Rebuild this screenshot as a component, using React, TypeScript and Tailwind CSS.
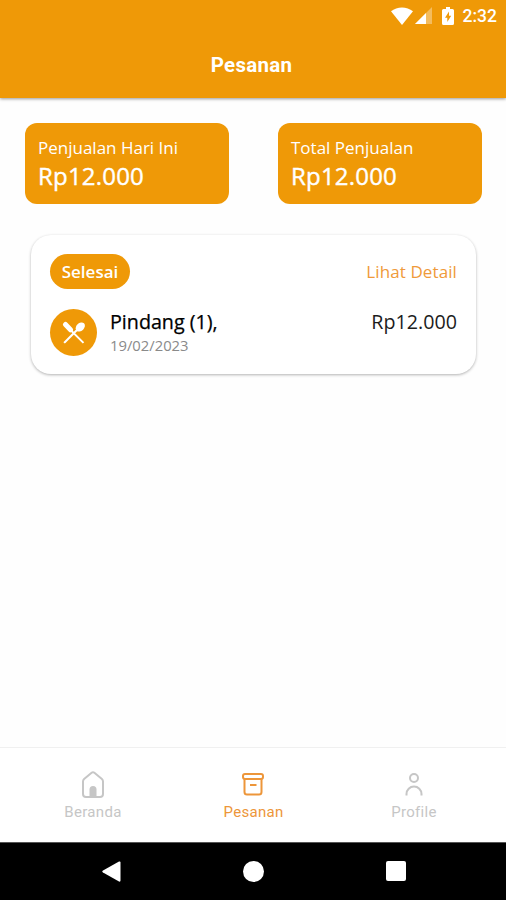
type Summary = { label: string; value: string };

const summaries: Summary[] = [
  { label: "Penjualan Hari Ini", value: "Rp12.000" },
  { label: "Total Penjualan", value: "Rp12.000" },
];

function StatusBar() {
  return (
    <div className="flex h-8 items-center justify-end pr-[9px] text-white">
      <svg width="22" height="18" viewBox="0 0 22 18" fill="currentColor">
        <path d="M0 4.2C6.2-.9 15.800-.9 22 4.200L11 18z" />
      </svg>
      <svg className="-mt-px ml-[2px]" width="17" height="17" viewBox="0 0 17 17" fill="currentColor">
        <path d="M17 0v17H0z" opacity="0.35" />
        <path d="M11 6v11H0z" />
      </svg>
      <svg className="-mt-px ml-[10px]" width="12" height="18" viewBox="0 0 12 18">
        <path
          d="M4 0h4v2h2.500Q12 2 12 3.500v13Q12 18 10.500 18h-9Q0 18 0 16.500v-13Q0 2 1.500 2H4z"
          fill="currentColor"
        />
        <path d="M7 4.500L3 10.800h2.300v4.200l3.900-6.300H7z" fill="#f09a08" />
      </svg>
      <span className="ml-[9px] font-['Roboto',sans-serif] text-[17.500px] font-medium leading-5">
        2:32
      </span>
    </div>
  );
}

function SummaryCard({ label, value }: Summary) {
  return (
    <div className="h-[81px] w-[204px] rounded-[12px] bg-[#ef9907] px-[13px] pt-[13px] text-white">
      <p className="text-[17px] leading-[23px]">{label}</p>
      <p className="text-[24px] leading-[33px] tracking-[0.2px] [-webkit-text-stroke:0.4px]">{value}</p>
    </div>
  );
}

function CutleryIcon() {
  return (
    <svg width="24" height="24" viewBox="0 0 24 24" fill="none" stroke="currentColor" strokeWidth="2">
      <path d="M3.500 3.500L8.500 8.800" strokeWidth="5" strokeLinecap="round" />
      <ellipse cx="18.300" cy="6" rx="5.200" ry="3.900" transform="rotate(-45 18.300 6)" fill="currentColor" stroke="none" />
      <path d="M15 9L2.800 21.200M8 8.500L20.800 21.200" strokeLinecap="square" />
    </svg>
  );
}

function OrderCard() {
  return (
    <div className="ml-[31px] mr-[30px] mt-[31px] h-[139px] rounded-[20px] bg-white px-[19px] pt-[19px] shadow-[0_1px_3px_rgba(0,0,0,0.3)]">
      <div className="flex items-center justify-between">
        <span className="flex h-[35px] w-20 items-center justify-center rounded-full bg-[#ef9907] text-[17px] font-semibold text-white">
          Selesai
        </span>
        <a className="text-[17px] tracking-[0.1px] text-[#ef9a3a]">Lihat Detail</a>
      </div>

      <div className="mt-5 flex">
        <div className="flex size-[47px] items-center justify-center rounded-full bg-[#ef9907] text-white">
          <CutleryIcon />
        </div>
        <div className="ml-[13px] flex-1">
          <p className="text-[19.700px] leading-[26px] text-black [-webkit-text-stroke:0.25px]">Pindang (1),</p>
          <p className="text-[14.800px] leading-5 text-[#8a8a8a]">19/02/2023</p>
        </div>
        <p className="text-[19.700px] leading-[26px] text-[#1c1c1c]">Rp12.000</p>
      </div>
    </div>
  );
}

function HomeIcon() {
  return (
    <svg width="26" height="30" viewBox="0 0 26 30" fill="none" stroke="currentColor" strokeWidth="2">
      <path d="M3 11.500Q3 10 4.100 9L11.600 2.800Q13 1.700 14.400 2.800L21.900 9Q23 10 23 11.500V24Q23 27 20 27H6Q3 27 3 24z" />
      <path d="M9.500 27v-7.500a3.500 3.500 0 0 1 7 0V27z" fill="currentColor" stroke="none" />
    </svg>
  );
}

function OrderIcon() {
  return (
    <svg width="26" height="30" viewBox="0 0 26 30" fill="none" stroke="currentColor" strokeWidth="2">
      <rect x="3" y="4" width="20" height="5" rx="2" />
      <path d="M4.500 9v13Q4.500 24.500 7 24.500h12Q21.500 24.500 21.500 22V9M10 15h6.500" />
    </svg>
  );
}

function ProfileIcon() {
  return (
    <svg width="26" height="30" viewBox="0 0 26 30" fill="none" stroke="currentColor" strokeWidth="2">
      <circle cx="13" cy="8" r="4" />
      <path d="M5.500 25.500v-1.500a7.500 7.500 0 0 1 15 0v1.500" />
    </svg>
  );
}

function BottomTabs() {
  const tabs = [
    { label: "Beranda", icon: <HomeIcon />, active: false },
    { label: "Pesanan", icon: <OrderIcon />, active: true },
    { label: "Profile", icon: <ProfileIcon />, active: false },
  ];

  return (
    <nav className="flex h-[95px] justify-center border-t border-[#f0f0f0] bg-white font-['Roboto',sans-serif]">
      {tabs.map((tab) => (
        <button
          key={tab.label}
          className={`flex w-[160.500px] flex-col items-center pt-[22px] ${
            tab.active ? "text-[#ed963a]" : "text-[#c6c6c6]"
          }`}
        >
          {tab.icon}
          <span className="mt-[3px] pl-px text-[15px] leading-[18px] tracking-[0.3px]">{tab.label}</span>
        </button>
      ))}
    </nav>
  );
}

function SystemNav() {
  return (
    <div className="flex h-[58px] items-center justify-between border-t border-[#555] bg-black pb-px pl-[102px] pr-[100px] text-white">
      <svg width="19" height="21" viewBox="0 0 19 21" fill="currentColor">
        <path d="M17 .5Q18.500 0 18.500 1.500v18Q18.500 21 17 20.500L1 11.500Q-.5 10.500 1 9.500z" />
      </svg>
      <div className="size-[21px] rounded-full bg-white" />
      <div className="size-5 rounded-[2px] bg-white" />
    </div>
  );
}

export default function App() {
  return (
    <div className="flex h-[900px] w-[506px] flex-col overflow-hidden bg-[#fefefe] font-['Open_Sans',sans-serif]">
      <header className="h-[98px] bg-[#ef9907] shadow-[0_1px_3px_rgba(0,0,0,0.4)]">
        <StatusBar />
        <h1 className="pr-[3px] pt-[20px] text-center font-['Roboto',sans-serif] text-[20.500px] font-bold leading-[27px] tracking-[0.3px] text-white">
          Pesanan
        </h1>
      </header>

      <main className="flex-1">
        <div className="mt-[25px] flex justify-between pl-[25px] pr-6">
          {summaries.map((item) => (
            <SummaryCard key={item.label} label={item.label} value={item.value} />
          ))}
        </div>
        <OrderCard />
      </main>

      <BottomTabs />
      <SystemNav />
    </div>
  );
}
